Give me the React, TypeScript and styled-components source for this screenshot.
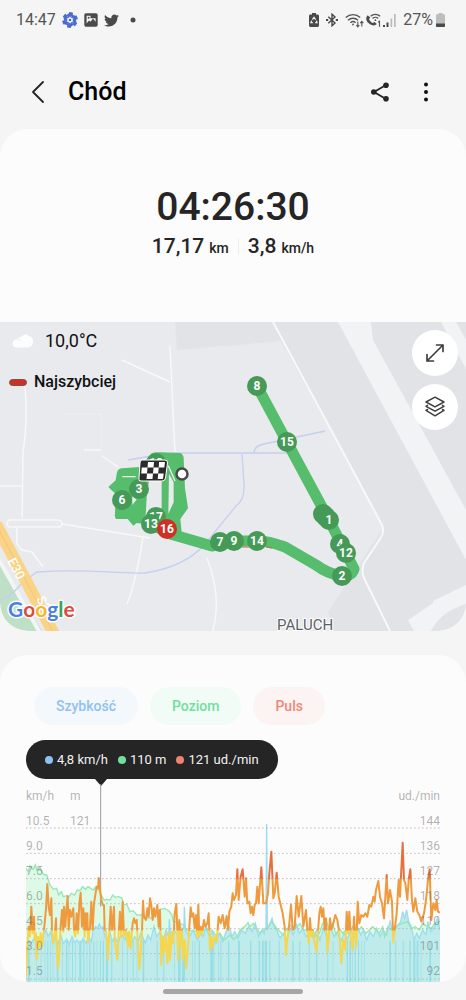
import React from "react";
import styled, { createGlobalStyle } from "styled-components";
import { FaTwitter } from "react-icons/fa";

const GlobalStyle = createGlobalStyle`
  *, *::before, *::after { box-sizing: border-box; }
  body {
    margin: 0;
    background: #f5f5f5;
    color: #252525;
    font-family: Roboto, "Liberation Sans", sans-serif;
  }
  button { font: inherit; color: inherit; border: 0; padding: 0; background: none; cursor: pointer; }
  h1, p { margin: 0; }
`;

/* ---------- Status bar ---------- */

const StatusBar = styled.div`
  display: flex;
  justify-content: space-between;
  align-items: center;
  height: 40px;
  padding: 0 21px 0 16px;
  color: #555;
  font-size: 16px;
  line-height: 20px;
`;

const StatusGroup = styled.div<{ $gap: number }>`
  display: flex;
  align-items: center;
  gap: ${(p) => p.$gap}px;
  svg { display: block; }
`;

/* ---------- App bar ---------- */

const AppBar = styled.header`
  display: flex;
  align-items: center;
  height: 89px;
  padding: 14px 10px 0 24px;
`;

const Title = styled.h1`
  flex: 1;
  margin-left: 16px;
  color: #000;
  font-size: 25px;
  font-weight: 500;
  line-height: 32px;
`;

const IconButton = styled.button<{ $width: number }>`
  display: flex;
  align-items: center;
  justify-content: center;
  width: ${(p) => p.$width}px;
  height: 32px;
`;

/* ---------- Cards ---------- */

const Card = styled.section`
  overflow: hidden;
  border-radius: 28px;
  background: #fcfcfc;
`;

const Summary = styled.div`
  display: flex;
  flex-direction: column;
  align-items: center;
  padding: 55px 16px 61px;
`;

const Duration = styled.p`
  font-size: 39px;
  font-weight: 500;
  line-height: 46px;
`;

const Stats = styled.div`
  display: flex;
  align-items: center;
  margin-top: 3px;
  line-height: 26px;
`;

const Stat = styled.p`
  font-size: 21px;
  font-weight: 500;
`;

const Unit = styled.span`
  margin-left: 5px;
  font-size: 14px;
`;

const Divider = styled.span`
  width: 1px;
  height: 16px;
  margin: 0 9px;
  background: #ededed;
`;

/* ---------- Map ---------- */

const MapPanel = styled.div`
  position: relative;
  height: 309px;
  overflow: hidden;
  border-radius: 0 0 28px 28px;
  background: #e8eaed;
`;

const MapCanvas = styled.svg`
  position: absolute;
  inset: 0;
  width: 100%;
  height: 100%;
`;

const MapOverlay = styled.div`
  position: relative;
  display: flex;
  justify-content: space-between;
  padding: 8px 8px 0 9px;
  color: #111;
`;

const MapLegend = styled.div`
  display: flex;
  flex-direction: column;
  gap: 19px;
`;

const LegendRow = styled.div<{ $gap: number; $size: number; $weight: number }>`
  display: flex;
  align-items: center;
  gap: ${(p) => p.$gap}px;
  font-size: ${(p) => p.$size}px;
  font-weight: ${(p) => p.$weight};
  line-height: 22px;
`;

const FastSwatch = styled.span`
  width: 18px;
  height: 7px;
  border: 1px solid #76564a;
  border-radius: 4px;
  background: #cf3024;
`;

const MapControls = styled.div`
  display: flex;
  flex-direction: column;
  gap: 8px;
`;

const RoundButton = styled.button`
  && {
    display: flex;
    align-items: center;
    justify-content: center;
    width: 46px;
    height: 46px;
    border-radius: 50%;
    background: #fff;
  }
`;

/* ---------- Chart card ---------- */

const ChartCard = styled(Card)`
  margin-top: 24px;
  padding: 32px 26px 0;
`;

const Chips = styled.div`
  display: flex;
  gap: 12px;
  padding-left: 8px;
`;

const Chip = styled.button<{ $fg: string; $bg: string }>`
  && {
    height: 38px;
    padding: 0 22px;
    border-radius: 19px;
    background: ${(p) => p.$bg};
    color: ${(p) => p.$fg};
    font-size: 14px;
    font-weight: 500;
  }
`;

const Tooltip = styled.div`
  position: relative;
  display: flex;
  width: fit-content;
  gap: 10px;
  margin-top: 15px;
  padding: 0 19px;
  border-radius: 20px;
  background: #252525;
  color: #f2f2f2;
  font-size: 13px;
  line-height: 39px;

  &::after {
    content: "";
    position: absolute;
    top: 100%;
    left: 69px;
    border: solid transparent;
    border-width: 7px 6px 0;
    border-top-color: #252525;
  }
`;

const Reading = styled.span<{ $dot: string }>`
  display: flex;
  align-items: center;
  gap: 4px;
  white-space: nowrap;

  &::before {
    content: "";
    width: 8px;
    height: 8px;
    border-radius: 50%;
    background: ${(p) => p.$dot};
  }
`;

const Plot = styled.div`
  position: relative;
  height: 203px;
  padding-top: 8px;
`;

const PlotCanvas = styled.svg`
  position: absolute;
  inset: 0;
  width: 100%;
  height: 100%;
`;

const AxisRow = styled.div`
  position: relative;
  display: flex;
  height: 25px;
  color: rgba(95, 95, 95, 0.48);
  font-size: 12px;
  line-height: 18px;
`;

const AxisCell = styled.span<{ $grow?: boolean }>`
  width: ${(p) => (p.$grow ? "auto" : "44px")};
  flex: ${(p) => (p.$grow ? 1 : "none")};
`;

const HomeArea = styled.footer`
  display: flex;
  justify-content: center;
  align-items: center;
  height: 18px;
`;

const HomeHandle = styled.span`
  width: 30%;
  height: 5px;
  border-radius: 3px;
  background: #a6a6a6;
`;

/* ---------- Status icons ---------- */

const PetalIcon = () => (
  <svg width="16" height="16" viewBox="0 0 16 16" fill="#4a6bd0">
    {[0, 60, 120, 180, 240, 300].map((a) => (
      <g key={a} transform={`rotate(${a + 8} 8 8)`}>
        <rect x="6" y="0.200" width="4" height="3.600" rx="0.700" />
        <rect x="9.200" y="2.600" width="3" height="3" rx="0.500" />
      </g>
    ))}
    <path d="M8 4.200l3.300 1.900v3.800L8 11.800 4.700 9.900V6.100z" fill="none" stroke="#4a6bd0" strokeWidth="1.200" strokeDasharray="2.400 1.400" />
    <circle cx="8" cy="8" r="1.300" />
  </svg>
);

const PictureIcon = () => (
  <svg width="14" height="14" viewBox="0 0 14 14">
    <path
      fillRule="evenodd"
      d="M2 .3h10A1.700 1.700 0 0 1 13.700 2v10a1.700 1.700 0 0 1-1.700 1.700H2A1.700 1.700 0 0 1 .3 12V2A1.700 1.700 0 0 1 2 .3zM2.600 2.800v7.600L5 7.400l1.600 1.400L9 5.600l2.600 3.200V5.200H6.500V2.800z"
      fill="#4a4a4a"
    />
    <circle cx="4.600" cy="4.800" r="1" fill="#4a4a4a" />
  </svg>
);

const RecycleBatteryIcon = () => (
  <svg width="10" height="14" viewBox="0 0 10 14">
    <path d="M3 0h4v1.500h1.600A1.400 1.400 0 0 1 10 2.900v9.700A1.400 1.400 0 0 1 8.600 14H1.400A1.400 1.400 0 0 1 0 12.600V2.900A1.400 1.400 0 0 1 1.400 1.500H3z" fill="#4a4a4a" />
    <path d="M3.400 6.600L5 4.300l1.600 2.300M7.300 7.600l.9 2.200H6M4 9.800H1.800l.9-2.200" fill="none" stroke="#f5f5f5" strokeWidth="1.100" />
  </svg>
);

const BluetoothIcon = () => (
  <svg width="12" height="14" viewBox="0 0 12 14" fill="none" stroke="#4a4a4a" strokeWidth="1.400">
    <path d="M2.300 3.800L9 10 6 12.800V1.200L9 4 2.300 10.200" />
    <path d="M0 7h2.200M9.800 7H12" strokeWidth="1.900" />
  </svg>
);

const WifiIcon = () => (
  <svg width="19" height="15" viewBox="0 0 19 15" fill="none" stroke="#555" strokeWidth="1.400">
    <path d="M.8 4.500a10.500 10.500 0 0 1 14.400 0M3 7.200a7.400 7.400 0 0 1 10 0M5.400 9.700a4 4 0 0 1 5.200 0" />
    <circle cx="8" cy="11.500" r=".9" fill="#555" stroke="none" />
    <path d="M12.800 8.500v5M11.300 12l1.500 1.800 1.500-1.800M16.800 13.500v-5M15.300 10.200l1.500-1.800 1.500 1.800" strokeWidth="1.100" />
  </svg>
);

const WifiCallIcon = () => (
  <svg width="17" height="15" viewBox="0 0 17 15" fill="none" stroke="#555" strokeWidth="1.300">
    <path d="M2.700 2.200C.2 4.800 1.200 8 3.800 10.300s6 3 8 .8L9.500 9 7.800 10C6.400 9.400 4.600 7.600 4 6.200L5.200 4.600z" fill="#4a4a4a" stroke="none" />
    <path d="M5.600 3.300a7 7 0 0 1 9.600 0M7.600 5.500a4 4 0 0 1 5.600 0" />
    <circle cx="10.400" cy="7.200" r=".9" fill="#555" stroke="none" />
    <path d="M13 9.200l1.500-1v5.600" strokeWidth="1.100" />
  </svg>
);

const SignalIcon = () => (
  <svg width="13" height="13" viewBox="0 0 13 13">
    <path d="M0 11h2v2H0zM3.500 8.500h2V13h-2z" fill="#4a4a4a" />
    <path d="M7.500 4.500h1.700V13H7.500zM11 0h1.700v13H11z" fill="#bbb" />
  </svg>
);

const BatteryIcon = () => (
  <svg width="9" height="14" viewBox="0 0 9 14">
    <path d="M2.500 0h4v1.200H8A1 1 0 0 1 9 2.200V14H0V2.200a1 1 0 0 1 1-1h1.500z" fill="#bdbdbd" />
    <path d="M0 10.500h9V13a1 1 0 0 1-1 1H1a1 1 0 0 1-1-1z" fill="#4a4a4a" />
  </svg>
);

/* ---------- Map drawing ---------- */

type Pin = { x: number; y: number; label: string; fast?: boolean };

const PINS: Pin[] = [
  { x: 257, y: 64, label: "8" },
  { x: 287, y: 120, label: "15" },
  { x: 323, y: 192, label: "" },
  { x: 326, y: 195, label: "" },
  { x: 329, y: 198, label: "1" },
  { x: 340, y: 222, label: "4" },
  { x: 346, y: 231, label: "12" },
  { x: 342, y: 254, label: "2" },
  { x: 257, y: 219, label: "14" },
  { x: 234, y: 219, label: "9" },
  { x: 220, y: 220, label: "7" },
  { x: 156, y: 141, label: "10" },
  { x: 139, y: 167, label: "3" },
  { x: 122, y: 178, label: "6" },
  { x: 156, y: 195, label: "17" },
  { x: 151, y: 202, label: "13" },
  { x: 167, y: 207, label: "16", fast: true },
];

const GOOGLE: [string, string][] = [
  ["G", "#4a7fe8"],
  ["o", "#dc4b3e"],
  ["o", "#f2b92c"],
  ["g", "#4a7fe8"],
  ["l", "#3da35a"],
  ["e", "#dc4b3e"],
];

const RouteMap = () => (
  <MapCanvas viewBox="0 0 466 309" preserveAspectRatio="xMidYMid slice" role="img" aria-label="Mapa trasy">
    <path d="M175 0L177 28 281 19 358 158 383 206 328 290 333 309H466V0z" fill="#e1e3e7" />
    <g fill="#f1f3f5">
      <path d="M338 0H371L373 18 466 188V238z" />
      <path d="M441 0H456L466 18V47z" />
      <path d="M408 298L433 281V279L466 263V282Q440 290 431 309H414z" />
    </g>
    <path d="M0 238L42 309H0z" fill="#bfe0c6" />
    <path d="M-2 236L40 311" stroke="#f4f5f6" strokeWidth="4" />
    <g fill="none" stroke="#f7f8f9" strokeWidth="1.500">
      <path d="M273 0L358 158 382 203Q385 210 380 217L364 241Q361 248 364 256L390 309" strokeWidth="2" />
      <path d="M170 24L175 132M122 38L170 60M102 134L118 145M84 128H101M25 64Q28 100 23 130L22 196M0 164H22" />
      <rect x="7" y="198" width="55" height="7" rx="3.500" />
      <path d="M62 202L150 216M17 206V222L22 228 32 230 43 245M143 215Q136 260 127 282M207 236Q222 275 213 309" />
      <path d="M64 92H101V124" strokeOpacity=".5" strokeWidth="1" />
    </g>
    <g fill="none" stroke="#c5cff0" strokeWidth="1.300">
      <path d="M128 138Q150 134 175 131H287M254 131Q254 124 264 122L325 109M242 132L244 162Q245 178 236 184L205 222Q185 245 145 251C110 252 90 246 37 250L22 261Q12 274 0 278" />
    </g>
    <path d="M-4 202L54 312" stroke="#fad486" strokeWidth="12" />
    <path d="M-4 202L54 312" stroke="#f0c577" strokeWidth="1" />
    <g fill="#fff" fontFamily="Roboto, sans-serif" fontWeight="500" fontSize="13">
      <text x="7" y="239" transform="rotate(62 7 239)">E30</text>
      <text x="36" y="277" transform="rotate(62 36 277)">S2</text>
    </g>

    <path
      d="M257 64L287 120 329 198 346 231 354 247Q352 254 342 254 328 252 316 243L285 225Q265 218 257 219H220L212 224 167 211"
      fill="none"
      stroke="#55bd6b"
      strokeWidth="11"
      strokeLinejoin="round"
    />
    <path d="M242 225H250M266 225L272 226" stroke="#c56a48" strokeWidth="1" />
    <g transform="translate(105 123) scale(.3333)">
      <path
        fillRule="evenodd"
        d="M10 126L32 106 36 82Q40 70 52 70L105 66 140 25Q150 20 165 22L225 24Q236 28 236 40L240 130 249 190 226 222 230 262 200 285 150 262 115 236 95 234 85 242 68 222 34 222Q28 218 30 205L32 146 20 136zM126 140L132 108 170 100V190L138 190 122 212zM192 86L206 112V172L190 206z"
        fill="#55bd6b"
      />
      <path d="M52 95H92M190 62L210 108M84 158L92 164 84 174z" fill="#eef3ef" stroke="#eef3ef" strokeWidth="4" />
    </g>

    {PINS.map((p) => (
      <g key={`${p.x}-${p.y}`}>
        <circle cx={p.x} cy={p.y} r="10" fill={p.fast ? "#cf3024" : "#459a58"} />
        {p.label && (
          <text x={p.x} y={p.y + 4} textAnchor="middle" fill="#fff" fontSize="12" fontWeight="700" fontFamily="Roboto, sans-serif">
            {p.label}
          </text>
        )}
      </g>
    ))}

    <g transform="translate(139 138)">
      <path d="M3 0H26Q29 0 28.500 3L26.500 18Q26 21 23 21H2Q-1 21 0 18L1 3Q1 0 3 0z" fill="#2b2b2b" stroke="#fff" strokeWidth="1" />
      <path d="M9 2h6l-.5 5.500h-6zM20 2h6l-.7 5.500h-5.500zM2.800 7.500h5.700L8 13.500H2.200zM14.500 7.500h5.300l-.6 6h-5.200zM8 13.500h6l-.5 5.500H7.500zM19.200 13.500h5.500L24 19h-5.300z" fill="#fff" />
    </g>
    <circle cx="182" cy="152" r="5.500" fill="#fff" stroke="#4a4a4a" strokeWidth="2.500" />

    <text x="8" y="295" fontSize="21" fontFamily="Lato, sans-serif" fontWeight="700" stroke="#fff" strokeWidth="3" strokeLinejoin="round" paintOrder="stroke">
      {GOOGLE.map(([letter, color], i) => (
        <tspan key={i} fill={color}>{letter}</tspan>
      ))}
    </text>
    <text x="277" y="308" fontSize="15" fill="#5c6066" fontFamily="Roboto, sans-serif" stroke="#fff" strokeWidth="2" paintOrder="stroke">
      PALUCH
    </text>
  </MapCanvas>
);

/* ---------- Chart data ---------- */

const PLOT_BOTTOM = 606;
const GRID = [144, 220, 296, 371, 446, 521, 597];

const PULSE =
  "0,590 4,500 8,440 12,470 16,380 20,460 24,410 26,480 30,460 32,540 36,470 40,500 44,460 48,500 52,465 56,430 60,385 64,312 68,380 72,405 76,355 78,450 82,490 86,470 90,415 92,500 96,565 100,520 104,440 108,390 112,455 114,380 118,440 122,380 125,348 128,450 132,390 136,410 142,385 144,450 148,470 152,400 156,460 160,370 164,338 168,440 172,385 176,470 178,400 182,450 184,400 186,488 192,440 196,365 200,450 204,370 208,345 212,320 216,325 218,295 222,330 226,360 230,375 234,375 236,450 240,455 244,500 246,540 250,455 254,380 258,450 264,380 266,480 272,520 274,540 278,460 282,395 286,470 290,365 294,470 300,450 306,500 310,455 314,505 320,430 324,415 328,430 332,420 336,500 340,568 344,520 348,450 351,362 354,410 360,420 364,385 368,410 372,355 376,375 380,420 384,385 388,410 394,375 398,440 402,390 406,555 410,470 414,520 420,460 424,550 430,460 432,540 438,455 442,490 446,400 451,372 454,450 456,540 460,420 464,500 468,450 470,540 476,480 481,566 486,500 490,440 494,382 498,410 502,400 506,445 510,405 514,470 517,374 520,470 524,440 528,460 534,420 538,440 544,430 548,400 552,512 556,470 560,500 566,470 572,485 578,410 584,430 590,405 596,445 602,408 606,450 610,395 616,380 620,340 624,360 630,345 634,268 638,360 644,290 650,268 656,350 660,295 664,370 670,365 674,400 678,380 682,405 686,375 690,370 694,320 698,370 706,262 712,370 720,370 726,340 730,280 736,215 742,355 746,340 752,278 758,350 764,375 770,400 776,440 780,525 784,480 790,430 795,374 800,450 806,440 812,348 818,410 826,348 832,440 840,390 844,450 848,490 852,415 856,470 860,450 866,490 872,515 876,455 880,400 884,380 888,410 892,385 896,450 900,415 904,515 908,480 912,415 916,450 922,430 928,405 934,420 940,460 946,550 952,480 958,510 962,395 966,460 970,395 974,470 980,510 984,410 988,470 991,500 995,365 1000,430 1006,405 1012,410 1018,400 1024,410 1030,375 1036,380 1042,350 1046,365 1050,330 1057,303 1062,350 1068,370 1074,415 1082,285 1086,370 1092,330 1098,365 1102,488 1106,450 1112,400 1118,300 1122,350 1130,188 1134,300 1138,310 1144,360 1148,300 1153,268 1158,360 1162,395 1168,355 1174,395 1180,405 1186,425 1194,400 1200,360 1206,300 1211,268 1216,420 1222,370 1228,390 1232,360 1236,395 1242,398";

const LEVEL =
  "0,265 6,275 12,258 22,268 28,255 34,275 42,262 50,280 56,285 62,285 72,315 82,328 92,325 98,345 106,335 112,350 122,347 128,352 136,340 146,345 154,330 162,332 170,320 178,328 186,320 194,325 202,330 210,320 218,330 226,345 234,360 242,358 252,360 260,345 268,352 278,350 288,355 294,375 302,372 312,395 322,392 332,405 342,405 352,405 362,412 372,415 378,412 390,400 402,388 416,385 428,392 438,405 442,425 452,425 462,430 472,435 482,450 512,455 522,460 532,450 542,448 548,460 558,450 568,465 582,460 594,480 606,470 612,465 622,478 634,470 642,450 656,440 666,428 672,440 682,430 692,445 702,460 712,450 726,440 738,425 752,445 762,455 772,465 782,450 792,435 802,450 812,440 822,430 832,450 840,450 850,470 860,450 870,470 880,460 890,430 900,420 910,450 920,430 930,465 940,445 950,460 960,450 970,460 980,440 990,455 1000,450 1006,440 1020,460 1030,450 1040,440 1050,450 1060,460 1070,440 1076,470 1086,440 1096,450 1106,440 1116,435 1130,430 1144,425 1156,445 1168,440 1180,450 1190,430 1204,440 1216,445 1226,430 1242,425";

const SPEED =
  "0,520 8,480 16,490 24,475 32,490 40,485 50,470 60,450 66,470 74,455 80,490 88,475 96,490 104,465 112,490 122,478 130,495 138,470 146,488 154,480 162,495 172,475 180,490 188,470 196,485 202,450 208,440 214,445 220,432 226,445 232,440 236,470 244,480 252,455 258,485 266,470 276,490 286,462 296,480 306,458 316,488 326,470 336,485 346,455 350,470 358,490 366,465 374,480 384,440 392,470 402,455 412,478 420,450 428,470 430,418 434,480 444,450 454,465 460,435 468,450 474,440 475,380 478,450 490,470 502,450 514,480 524,460 532,470 540,435 550,470 560,455 570,490 580,460 590,485 600,455 610,440 618,470 626,455 636,475 646,450 658,460 668,440 678,455 688,430 698,470 708,450 714,460 720,440 722,132 724,450 738,415 744,440 752,450 762,475 772,460 782,480 792,445 802,465 810,430 820,460 830,445 840,470 852,455 862,475 872,450 882,480 892,445 902,470 914,440 924,470 934,455 944,485 954,460 964,478 974,450 984,470 994,440 1004,465 1012,450 1022,480 1032,455 1042,470 1052,445 1062,470 1072,450 1082,465 1092,425 1102,460 1112,440 1124,425 1130,395 1136,415 1142,390 1148,425 1156,440 1164,480 1172,460 1180,475 1190,450 1200,465 1206,425 1214,455 1226,440 1234,415 1242,450";

const STOPS: [number, number][] = [
  [6, 5], [30, 2], [44, 2], [56, 2], [64, 3], [72, 2], [80, 2], [92, 5], [108, 2], [120, 4], [128, 2], [138, 3],
  [148, 2], [160, 6], [172, 3], [182, 2], [190, 3], [202, 3], [212, 2], [222, 3], [230, 4], [240, 6], [256, 3],
  [288, 2], [304, 2], [320, 3], [332, 2], [350, 5], [392, 3], [412, 3], [444, 2], [456, 8], [468, 9], [498, 2],
  [506, 2], [518, 4], [553, 8], [562, 3], [576, 2], [583, 3], [606, 4], [636, 6], [672, 4], [698, 4], [708, 5],
  [716, 7], [730, 3], [758, 3], [799, 4], [820, 3], [848, 3], [870, 4], [904, 3], [920, 2], [962, 4], [970, 5],
  [978, 2], [986, 3], [996, 3], [1006, 2], [1014, 2], [1090, 5], [1108, 3], [1130, 3], [1150, 4], [1162, 6],
  [1172, 5], [1184, 2], [1210, 5],
];

const area = (points: string) => `0,${PLOT_BOTTOM} ${points} 1242,${PLOT_BOTTOM}`;

const ActivityPlot = () => (
  <PlotCanvas viewBox="0 -3 1242 609" preserveAspectRatio="none" role="img" aria-label="Wykres prędkości, poziomu i pulsu">
    <defs>
      <linearGradient id="pulse" gradientUnits="userSpaceOnUse" x1="0" y1="0" x2="0" y2="600">
        <stop offset="0.490" stopColor="#e5703d" />
        <stop offset="0.500" stopColor="#ef9a3c" />
        <stop offset="0.750" stopColor="#ef9a3c" />
        <stop offset="0.755" stopColor="#f4d650" />
      </linearGradient>
    </defs>
    <polygon points={area(LEVEL)} fill="#dcfae6" />
    <polygon points={area(SPEED)} fill="#bfecea" />
    {STOPS.map(([x, w]) => (
      <rect key={x} x={x} y="482" width={w} height={PLOT_BOTTOM - 482} fill="#96dfe6" />
    ))}
    <polyline points={SPEED} fill="none" stroke="#9bdcf0" strokeWidth="4" />
    <polyline points={LEVEL} fill="none" stroke="#97e6b4" strokeWidth="4" />
    {GRID.map((y) => (
      <path key={y} d={`M0 ${y}H1242`} stroke="#a9a9a9" strokeOpacity=".7" strokeWidth="3" strokeDasharray="5 7" />
    ))}
    <path d="M224 12V380" stroke="#9b9b9b" strokeWidth="3" />
    <polyline points={PULSE} fill="none" stroke="url(#pulse)" strokeWidth="6" strokeLinejoin="round" />
  </PlotCanvas>
);

const AXIS: [string, string, string][] = [
  ["km/h", "m", "ud./min"],
  ["10.5", "121", "144"],
  ["9.0", "", "136"],
  ["7.5", "", "127"],
  ["6.0", "", "118"],
  ["4.5", "", "110"],
  ["3.0", "", "101"],
  ["1.5", "", "92"],
];

export default function App() {
  return (
    <>
      <GlobalStyle />
      <StatusBar>
        <StatusGroup $gap={6}>
          <span>14:47</span>
          <PetalIcon />
          <PictureIcon />
          <FaTwitter size={15} color="#4a4a4a" />
          <svg width="16" height="6" viewBox="0 0 16 6"><circle cx="8" cy="3" r="2.500" fill="#4a4a4a" /></svg>
        </StatusGroup>
        <StatusGroup $gap={7}>
          <StatusGroup $gap={7}>
            <RecycleBatteryIcon />
            <BluetoothIcon />
          </StatusGroup>
          <StatusGroup $gap={1}>
            <WifiIcon />
            <WifiCallIcon />
            <SignalIcon />
          </StatusGroup>
          <StatusGroup $gap={3}>
            <span>27%</span>
            <BatteryIcon />
          </StatusGroup>
        </StatusGroup>
      </StatusBar>

      <AppBar>
        <IconButton $width={28} aria-label="Wstecz">
          <svg width="14" height="24" viewBox="0 0 14 24" fill="none" stroke="#252525" strokeWidth="1.800" strokeLinecap="round" strokeLinejoin="round">
            <path d="M12 2L2 12l10 10" />
          </svg>
        </IconButton>
        <Title>Chód</Title>
        <IconButton $width={32} aria-label="Udostępnij">
          <svg width="20" height="20" viewBox="0 0 20 20" fill="#252525">
            <path d="M16 3L4 10l12 7" fill="none" stroke="#252525" strokeWidth="1.800" />
            <circle cx="16" cy="3.200" r="2.800" />
            <circle cx="3.800" cy="10" r="2.800" />
            <circle cx="16" cy="16.800" r="2.800" />
          </svg>
        </IconButton>
        <IconButton $width={60} aria-label="Więcej opcji">
          <svg width="6" height="20" viewBox="0 0 6 20" fill="#111">
            <circle cx="3" cy="2.400" r="2" />
            <circle cx="3" cy="10" r="2" />
            <circle cx="3" cy="17.600" r="2" />
          </svg>
        </IconButton>
      </AppBar>

      <Card>
        <Summary>
          <Duration>04:26:30</Duration>
          <Stats>
            <Stat>17,17<Unit>km</Unit></Stat>
            <Divider />
            <Stat>3,8<Unit>km/h</Unit></Stat>
          </Stats>
        </Summary>
        <MapPanel>
          <RouteMap />
          <MapOverlay>
            <MapLegend>
              <LegendRow $gap={12} $size={18} $weight={400}>
                <svg width="24" height="18" viewBox="0 0 24 18">
                  <path d="M8 15.500a4 4 0 0 1-.5-8 4 4 0 0 1 4-2 5.500 5.500 0 0 1 8.500-1.500 5 5 0 0 1 4 6q-.5 5-5 5.500z" fill="#fdfdfd" />
                  <path d="M8 7.500q3-1 4.500 2" fill="none" stroke="#f2f0ea" />
                </svg>
                10,0°C
              </LegendRow>
              <LegendRow $gap={7} $size={16} $weight={500}>
                <FastSwatch />
                Najszybciej
              </LegendRow>
            </MapLegend>
            <MapControls>
              <RoundButton aria-label="Powiększ mapę">
                <svg width="20" height="20" viewBox="0 0 20 20" fill="none" stroke="#3f3f3f" strokeWidth="1.700" strokeLinecap="round" strokeLinejoin="round">
                  <path d="M2 18L18 2M11.500 2H18v6.500M8.500 18H2v-6.500" />
                </svg>
              </RoundButton>
              <RoundButton aria-label="Warstwy mapy">
                <svg width="22" height="22" viewBox="0 0 22 22" fill="none" stroke="#3f3f3f" strokeWidth="1.500" strokeLinejoin="round" strokeLinecap="round">
                  <path d="M11 1.200l9 4.800-9 4.800L2 6z" />
                  <path d="M3.500 9.400L2 10.300l9 4.900 9-4.900-1.500-.9M3.500 13.500l-1.500.9 9 5.400 9-5.400-1.500-.9" />
                </svg>
              </RoundButton>
            </MapControls>
          </MapOverlay>
        </MapPanel>
      </Card>

      <ChartCard>
        <Chips>
          <Chip $fg="#92c0f2" $bg="#f3f8fd">Szybkość</Chip>
          <Chip $fg="#73dda0" $bg="#f0fcf5">Poziom</Chip>
          <Chip $fg="#ee8878" $bg="#fcf3f3">Puls</Chip>
        </Chips>
        <Tooltip>
          <Reading $dot="#8fc0f0">4,8 km/h</Reading>
          <Reading $dot="#6fe0a0">110 m</Reading>
          <Reading $dot="#ee8470">121 ud./min</Reading>
        </Tooltip>
        <Plot>
          <ActivityPlot />
          {AXIS.map(([speed, level, pulse]) => (
            <AxisRow key={speed}>
              <AxisCell>{speed}</AxisCell>
              <AxisCell $grow>{level}</AxisCell>
              <span>{pulse}</span>
            </AxisRow>
          ))}
        </Plot>
      </ChartCard>
      <HomeArea>
        <HomeHandle />
      </HomeArea>
    </>
  );
}
